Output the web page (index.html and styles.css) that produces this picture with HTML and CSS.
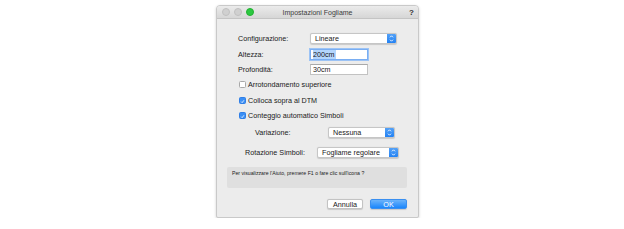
FILE: index.html
```html
<!DOCTYPE html>
<html>
<head>
<meta charset="utf-8">
<link rel="stylesheet" href="styles.css">
</head>
<body>
<div class="window">
  <div class="titlebar">
    <div class="lights"><span class="light"></span><span class="light"></span><span class="light green"></span></div>
    <div class="title">Impostazioni Fogliame</div>
    <div class="help">?</div>
  </div>
  <div class="content">
    <div class="row r-config">
      <span class="label">Configurazione:</span>
      <div class="popup w-config"><span class="ptext">Lineare</span><span class="stepper"><svg viewBox="0 0 9 11" width="9" height="11"><path d="M3 4.3 L4.5 2.8 L6 4.3 M3 6.7 L4.5 8.2 L6 6.7" fill="none" stroke="#fff" stroke-width="0.9"/></svg></span></div>
    </div>
    <div class="row r-alt">
      <span class="label">Altezza:</span>
      <div class="field focus"><span class="sel">200cm</span></div>
    </div>
    <div class="row r-prof">
      <span class="label">Profondità:</span>
      <div class="field">30cm</div>
    </div>
    <div class="check r-c1"><span class="box"></span><span>Arrotondamento superiore</span></div>
    <div class="check r-c2"><span class="box on"><svg viewBox="0 0 7 7" width="7" height="7"><path d="M1.6 3.7 L3 5.1 L5.5 1.8" fill="none" stroke="#fff" stroke-width="1.1"/></svg></span><span>Colloca sopra al DTM</span></div>
    <div class="check r-c3"><span class="box on"><svg viewBox="0 0 7 7" width="7" height="7"><path d="M1.6 3.7 L3 5.1 L5.5 1.8" fill="none" stroke="#fff" stroke-width="1.1"/></svg></span><span>Conteggio automatico Simboli</span></div>
    <div class="row r-var">
      <span class="label">Variazione:</span>
      <div class="popup w-var"><span class="ptext">Nessuna</span><span class="stepper"><svg viewBox="0 0 9 11" width="9" height="11"><path d="M3 4.3 L4.5 2.8 L6 4.3 M3 6.7 L4.5 8.2 L6 6.7" fill="none" stroke="#fff" stroke-width="0.9"/></svg></span></div>
    </div>
    <div class="row r-rot">
      <span class="label">Rotazione Simboli:</span>
      <div class="popup w-rot"><span class="ptext">Fogliame regolare</span><span class="stepper"><svg viewBox="0 0 9 11" width="9" height="11"><path d="M3 4.3 L4.5 2.8 L6 4.3 M3 6.7 L4.5 8.2 L6 6.7" fill="none" stroke="#fff" stroke-width="0.9"/></svg></span></div>
    </div>
    <div class="helpbox">Per visualizzare l'Aiuto, premere F1 o fare clic sull'icona ?</div>
    <div class="buttons">
      <div class="btn">Annulla</div>
      <div class="btn ok">OK</div>
    </div>
  </div>
</div>
</body>
</html>
```
FILE: styles.css
```css
html, body {
  margin: 0;
  padding: 0;
  background: #ffffff;
}
body {
  font-family: "Liberation Sans", Arial, sans-serif;
  font-size: 7.2px;
  color: #1a1a1a;
}
.window {
  margin: 5px 0 0 216px;
  width: 201px;
  height: 211px;
  background: #ececec;
  border: 1px solid #c9c9c9;
  border-radius: 4px 4px 2px 2px;
  box-shadow: 0 1px 3px rgba(0,0,0,0.18);
  display: flex;
  flex-direction: column;
  overflow: hidden;
}
.titlebar {
  height: 12px;
  flex: none;
  background: linear-gradient(#ebebeb, #d6d6d6);
  border-bottom: 1px solid #c4c4c4;
  display: flex;
  align-items: center;
  position: relative;
}
.lights {
  display: flex;
  gap: 4px;
  padding-left: 5px;
}
.light {
  width: 6px;
  height: 6px;
  border-radius: 50%;
  background: #d0d0d0;
  border: 0.5px solid #c0c0c0;
}
.light.green {
  background: #2bc840;
  border-color: #22b030;
}
.title {
  position: absolute;
  left: 0;
  right: 0;
  text-align: center;
  font-size: 7px;
  color: #3c3c3c;
}
.help {
  margin-left: auto;
  margin-right: 4px;
  font-weight: bold;
  font-size: 8px;
  color: #333;
}
.content {
  flex: 1;
  display: flex;
  flex-direction: column;
  padding-left: 21px;
}
.row {
  display: flex;
  align-items: center;
  height: 11px;
}
.label {
  width: 72px;
  flex: none;
}
.r-config { margin-top: 14px; }
.r-alt { margin-top: 5px; }
.r-prof { margin-top: 4px; }
.popup {
  height: 11px;
  box-sizing: border-box;
  background: #fff;
  border: 0.5px solid #c6c6c6;
  border-radius: 2px;
  box-shadow: 0 0.5px 1px rgba(0,0,0,0.15);
  display: flex;
  align-items: center;
  overflow: hidden;
}
.ptext {
  flex: 1;
  padding-left: 4px;
  white-space: nowrap;
}
.stepper {
  width: 9px;
  height: 11px;
  background: linear-gradient(#5aa5f7, #1d7ef3);
  display: flex;
}
.w-config { width: 87px; }
.field {
  width: 58px;
  height: 11px;
  box-sizing: border-box;
  background: #fff;
  border: 1px solid #c2c2c2;
  border-top-color: #a9a9a9;
  padding-left: 2px;
  display: flex;
  align-items: center;
}
.field.focus {
  border-color: #7aaef2;
  box-shadow: 0 0 0 1px #9cc3f5;
}
.sel {
  background: #b3d5fc;
  padding-right: 1px;
}
.check {
  display: flex;
  align-items: center;
  height: 11px;
  gap: 2px;
  padding-left: 1px;
}
.r-c1 { margin-top: 4px; }
.r-c2 { margin-top: 5px; }
.r-c3 { margin-top: 4px; }
.box {
  width: 7px;
  height: 7px;
  box-sizing: border-box;
  background: #fff;
  border: 0.7px solid #a8a8a8;
  border-radius: 1.5px;
  display: flex;
}
.box.on {
  background: #3b8ff5;
  border-color: #2f7ee6;
}
.r-var {
  margin-top: 6px;
  padding-left: 17px;
}
.r-var .label { width: 73px; }
.w-var { width: 67px; }
.r-rot {
  margin-top: 9px;
  padding-left: 7px;
}
.r-rot .label { width: 72px; }
.w-rot { width: 82px; }
.helpbox {
  margin: 9px 0 0 -11px;
  width: 180px;
  height: 21px;
  box-sizing: border-box;
  background: #dfdfdf;
  border-radius: 2px;
  font-size: 5.2px;
  padding: 3px 0 0 5px;
  color: #222;
}
.buttons {
  display: flex;
  gap: 7px;
  margin-top: 11px;
  padding-left: 89px;
}
.btn {
  width: 36px;
  height: 10px;
  box-sizing: border-box;
  background: #fff;
  border: 0.5px solid #c3c3c3;
  border-radius: 2px;
  box-shadow: 0 0.5px 1px rgba(0,0,0,0.15);
  display: flex;
  align-items: center;
  justify-content: center;
}
.btn.ok {
  width: 37px;
  background: linear-gradient(#6cb3fa, #1a86fc);
  border-color: #3a8ff0;
  color: #fff;
}
```
